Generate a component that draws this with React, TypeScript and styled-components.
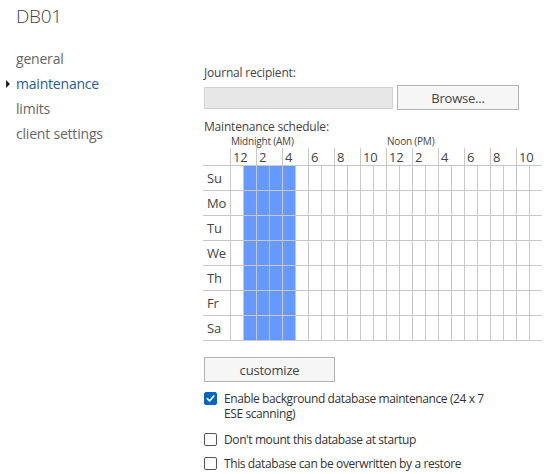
import React from "react";
import styled, { createGlobalStyle } from "styled-components";

const Global = createGlobalStyle`
  html, body { margin: 0; padding: 0; background: #fff; }
  body { font-family: "Segoe UI", "Open Sans", "Noto Sans", sans-serif; color: #333; }
`;

const Page = styled.div`
  display: flex;
  width: 549px;
  height: 474px;
  overflow: hidden;
`;

const Sidebar = styled.div`
  width: 187px;
  flex: none;
  padding-left: 16px;
`;

const Title = styled.div`
  font-size: 19px;
  font-weight: 300;
  color: #444;
  line-height: 24px;
  margin-top: 4px;
  letter-spacing: -0.3px;
`;

const Nav = styled.ul`
  list-style: none;
  margin: 18px 0 0;
  padding: 0;
`;

const NavItem = styled.li<{ $active?: boolean }>`
  position: relative;
  font-size: 14px;
  line-height: 25px;
  color: ${(p) => (p.$active ? "#1e5aa0" : "#666")};
  letter-spacing: -0.2px;
`;

const Arrow = styled.span`
  position: absolute;
  left: -10px;
  top: 9px;
  width: 0;
  height: 0;
  border-top: 4px solid transparent;
  border-bottom: 4px solid transparent;
  border-left: 4px solid #222;
`;

const Content = styled.div`
  flex: 1;
  padding-top: 64px;
  font-size: 12px;
  letter-spacing: -0.2px;
`;

const FieldLabel = styled.div`
  color: #444;
  line-height: 17px;
  margin-left: 1px;
`;

const InputRow = styled.div`
  display: flex;
  align-items: center;
  gap: 4px;
  margin-top: 4px;
  margin-left: 1px;
`;

const TextBox = styled.div`
  width: 187px;
  height: 20px;
  background: #e7e7e7;
  border: 1px solid #d2d2d2;
`;

const Button = styled.button<{ $w: number }>`
  width: ${(p) => p.$w}px;
  height: 25px;
  background: #f6f6f6;
  border: 1px solid #b3b3b3;
  font-family: inherit;
  font-size: 13px;
  color: #444;
  padding: 0;
  letter-spacing: -0.2px;
`;

const ScheduleLabel = styled(FieldLabel)`
  margin-top: 8px;
`;

const PeriodRow = styled.div`
  display: grid;
  grid-template-columns: 28px 156px 156px;
  font-size: 10px;
  color: #444;
  line-height: 13px;
  height: 13px;
`;

const HourRow = styled.div`
  display: grid;
  grid-template-columns: 27px repeat(12, 26px);
  height: 17px;
`;

const HourCell = styled.div`
  border-left: 1px solid #c8c8c8;
  font-size: 13px;
  color: #444;
  line-height: 19px;
  padding-left: 2px;
  overflow: visible;
  white-space: nowrap;
`;

const Grid = styled.div`
  display: grid;
  grid-template-columns: 27px repeat(24, 12px);
  grid-auto-rows: 24px;
  gap: 1px;
  padding: 1px 0;
  width: 339px;
  background: #c8c8c8;
`;

const DayCell = styled.div`
  background: #fff;
  font-size: 13px;
  color: #444;
  padding-left: 4px;
  line-height: 25px;
`;

const HourSlot = styled.div<{ $on?: boolean }>`
  background: ${(p) => (p.$on ? "#6699ff" : "#fff")};
`;

const CustomizeButton = styled(Button)`
  display: block;
  margin-top: 16px;
  margin-left: 1px;
`;

const CheckRow = styled.label<{ $mt: number }>`
  display: flex;
  align-items: flex-start;
  gap: 7px;
  margin-top: ${(p) => p.$mt}px;
  margin-left: 1px;
  font-size: 12px;
  color: #333;
  line-height: 15px;
  letter-spacing: -0.4px;
`;

const Box = styled.span<{ $checked?: boolean }>`
  flex: none;
  width: 11px;
  height: 11px;
  margin-top: 1px;
  border-radius: 2px;
  border: 1px solid ${(p) => (p.$checked ? "#0067c0" : "#555")};
  background: ${(p) => (p.$checked ? "#0067c0" : "#fff")};
  display: flex;
  align-items: center;
  justify-content: center;
`;

const CheckText = styled.span`
  width: 275px;
`;

const hours = ["12", "2", "4", "6", "8", "10", "12", "2", "4", "6", "8", "10"];
const days = ["Su", "Mo", "Tu", "We", "Th", "Fr", "Sa"];

function Check({ checked }: { checked?: boolean }) {
  return (
    <Box $checked={checked}>
      {checked && (
        <svg width="9" height="9" viewBox="0 0 9 9">
          <path d="M1.3 4.6 L3.6 6.9 L7.8 1.9" fill="none" stroke="#fff" strokeWidth="1.6" strokeLinecap="round" strokeLinejoin="round" />
        </svg>
      )}
    </Box>
  );
}

export default function App() {
  return (
    <>
      <Global />
      <Page>
        <Sidebar>
          <Title>DB01</Title>
          <Nav>
            <NavItem>general</NavItem>
            <NavItem $active>
              <Arrow />
              maintenance
            </NavItem>
            <NavItem>limits</NavItem>
            <NavItem>client settings</NavItem>
          </Nav>
        </Sidebar>
        <Content>
          <FieldLabel>Journal recipient:</FieldLabel>
          <InputRow>
            <TextBox />
            <Button $w={122}>Browse...</Button>
          </InputRow>
          <ScheduleLabel>Maintenance schedule:</ScheduleLabel>
          <PeriodRow>
            <span />
            <span>Midnight (AM)</span>
            <span>Noon (PM)</span>
          </PeriodRow>
          <HourRow>
            <span />
            {hours.map((h, i) => (
              <HourCell key={i}>{h}</HourCell>
            ))}
          </HourRow>
          <Grid>
            {days.map((d) => (
              <React.Fragment key={d}>
                <DayCell>{d}</DayCell>
                {Array.from({ length: 24 }, (_, i) => (
                  <HourSlot key={i} $on={i >= 1 && i <= 4} />
                ))}
              </React.Fragment>
            ))}
          </Grid>
          <CustomizeButton $w={131}>customize</CustomizeButton>
          <CheckRow $mt={9}>
            <Check checked />
            <CheckText>Enable background database maintenance (24 x 7 ESE scanning)</CheckText>
          </CheckRow>
          <CheckRow $mt={11}>
            <Check />
            <CheckText>Don't mount this database at startup</CheckText>
          </CheckRow>
          <CheckRow $mt={9}>
            <Check />
            <CheckText>This database can be overwritten by a restore</CheckText>
          </CheckRow>
        </Content>
      </Page>
    </>
  );
}
